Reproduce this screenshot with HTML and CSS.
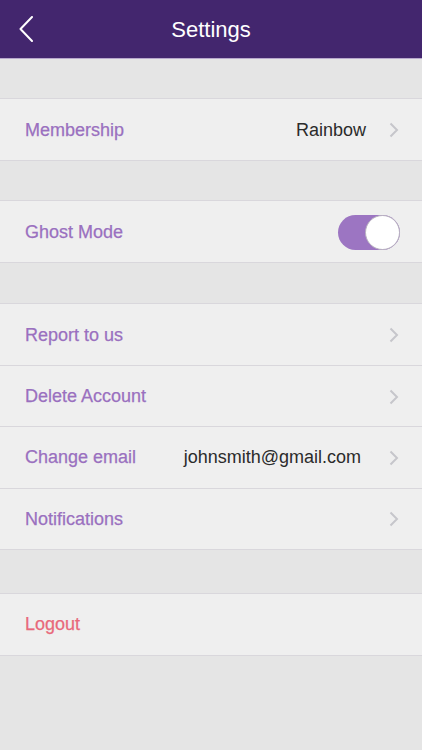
FILE: index.html
```html
<!DOCTYPE html>
<html>
<head>
<meta charset="utf-8">
<link rel="stylesheet" href="styles.css">
</head>
<body>
<header class="nav">
  <span class="back"><svg width="14" height="26" viewBox="0 0 14 26"><path d="M13 1 L1.5 13 L13 25" fill="none" stroke="#fff" stroke-width="2" stroke-linecap="round" stroke-linejoin="round"/></svg></span>
  <h1 class="title">Settings</h1>
</header>
<main class="content">
  <section class="group">
    <div class="row">
      <span class="label">Membership</span>
      <span class="value">Rainbow</span>
      <span class="chev"><svg width="10" height="16" viewBox="0 0 10 16"><path d="M1.5 1.5 L8 8 L1.5 14.5" fill="none" stroke="#c6c6cb" stroke-width="2"/></svg></span>
    </div>
  </section>
  <section class="group">
    <div class="row">
      <span class="label">Ghost Mode</span>
      <span class="toggle"><span class="knob"></span></span>
    </div>
  </section>
  <section class="group list-group">
    <div class="row">
      <span class="label">Report to us</span>
      <span class="chev"><svg width="10" height="16" viewBox="0 0 10 16"><path d="M1.5 1.5 L8 8 L1.5 14.5" fill="none" stroke="#c6c6cb" stroke-width="2"/></svg></span>
    </div>
    <div class="row">
      <span class="label">Delete Account</span>
      <span class="chev"><svg width="10" height="16" viewBox="0 0 10 16"><path d="M1.5 1.5 L8 8 L1.5 14.5" fill="none" stroke="#c6c6cb" stroke-width="2"/></svg></span>
    </div>
    <div class="row">
      <span class="label">Change email</span>
      <span class="value email">johnsmith@gmail.com</span>
      <span class="chev"><svg width="10" height="16" viewBox="0 0 10 16"><path d="M1.5 1.5 L8 8 L1.5 14.5" fill="none" stroke="#c6c6cb" stroke-width="2"/></svg></span>
    </div>
    <div class="row">
      <span class="label">Notifications</span>
      <span class="chev"><svg width="10" height="16" viewBox="0 0 10 16"><path d="M1.5 1.5 L8 8 L1.5 14.5" fill="none" stroke="#c6c6cb" stroke-width="2"/></svg></span>
    </div>
  </section>
  <section class="group logout-group">
    <div class="row">
      <span class="label logout">Logout</span>
    </div>
  </section>
</main>
</body>
</html>
```
FILE: styles.css
```css
* { box-sizing: border-box; margin: 0; padding: 0; }
html, body { width: 422px; height: 750px; }
body {
  background: #e5e5e5;
  font-family: "Liberation Sans", Arial, sans-serif;
  overflow: hidden;
}
.nav {
  height: 59px;
  background: #43266e;
  border-bottom: 1px solid #b8a8cc;
  display: flex;
  align-items: center;
  justify-content: center;
  position: relative;
}
.back {
  position: absolute;
  left: 19px;
  top: 16px;
  display: flex;
}
.title {
  color: #fff;
  font-size: 22px;
  font-weight: normal;
  margin-top: 2px;
}
.content {
  display: flex;
  flex-direction: column;
  padding-top: 39px;
  gap: 39px;
}
.list-group { margin-top: 1px; }
.logout-group { margin-top: 4px; }
.group {
  background: #efefef;
  border-top: 1px solid #d9d7dc;
  border-bottom: 1px solid #d9d7dc;
}
.row {
  height: 61px;
  display: flex;
  align-items: center;
  padding: 1px 23px 0 25px;
}
.row + .row {
  height: 61.25px;
  border-top: 1px solid #d9d7dc;
}
.label {
  color: #9a70bf;
  font-size: 18px;
  flex: 1;
  -webkit-text-stroke: 0.25px currentColor;
}
.logout { color: #e8697b; }
.value {
  color: #2b2b2b;
  font-size: 18px;
  margin-right: 23px;
}
.email { margin-right: 28px; }
.chev { display: flex; }
.toggle {
  width: 62px;
  height: 35px;
  border-radius: 18px;
  background: #9c75c2;
  position: relative;
  margin-right: -1px;
}
.knob {
  position: absolute;
  right: 0;
  top: 0;
  width: 35px;
  height: 35px;
  border-radius: 50%;
  background: #fff;
  border: 1px solid #b7b0bf;
}
```
